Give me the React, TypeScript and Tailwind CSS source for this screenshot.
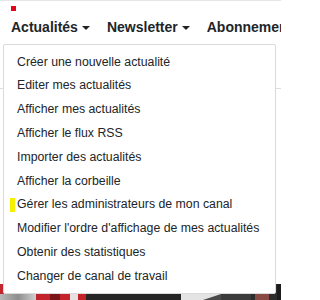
import React from 'react';

const menuItems = [
  'Créer une nouvelle actualité',
  'Editer mes actualités',
  'Afficher mes actualités',
  'Afficher le flux RSS',
  'Importer des actualités',
  'Afficher la corbeille',
  'Gérer les administrateurs de mon canal',
  "Modifier l'ordre d'affichage de mes actualités",
  'Obtenir des statistiques',
  'Changer de canal de travail',
];

const Caret = () => (
  <span className="ml-[4px] inline-block h-0 w-0 border-x-[4px] border-t-[4.5px] border-x-transparent border-t-[#222] align-[2px]" />
);

const NavLink = ({ label, caret = true }: { label: string; caret?: boolean }) => (
  <span className="whitespace-nowrap">
    {label}
    {caret && <Caret />}
  </span>
);

// bottom strip: cropped tops of the news card photos
const PhotoLeft = () => (
  <svg width="181" height="16" viewBox="0 0 181 16" className="block shrink-0">
    <defs>
      <linearGradient id="crowd" x1="0" x2="1">
        <stop offset="0" stopColor="#b8b8b8" />
        <stop offset="0.5" stopColor="#8e8e8e" />
        <stop offset="1" stopColor="#d0d0d0" />
      </linearGradient>
    </defs>
    <rect x="0" y="0" width="181" height="16" fill="#262626" />
    <rect x="0" y="0" width="36" height="16" fill="url(#crowd)" />
    <rect x="0" y="0" width="4" height="10" fill="#c4262e" />
    <rect x="36" y="0" width="50" height="16" fill="#c3242c" />
    <rect x="50" y="8" width="10" height="8" fill="#7a1418" />
    <rect x="70" y="6" width="8" height="10" fill="#e9e1e1" />
  </svg>
);

const PhotoRight = () => (
  <svg width="100" height="16" viewBox="0 0 100 16" className="block shrink-0">
    <rect x="0" y="0" width="100" height="16" fill="#2d2d2d" />
    <rect x="0" y="0" width="40" height="16" fill="#e4e4e4" />
    <polygon points="22,16 40,10 40,16" fill="#4a4a4a" />
    <rect x="40" y="0" width="30" height="16" fill="#3b3b3b" />
    <rect x="74" y="8" width="14" height="8" fill="#8a4a44" />
    <rect x="96" y="0" width="4" height="16" fill="#1c1c1c" />
  </svg>
);

const App: React.FC = () => {
  return (
    <div className="relative h-[300px] w-[281px] overflow-hidden border-t border-[#e6e6e6] bg-white font-['Liberation_Sans',Arial,sans-serif] text-[#212529]">
      <header className="pl-[11px] pt-[5px]">
        <div className="h-[5px] w-[5px] bg-[#e3051b]" />
        <nav className="mt-[7px] flex gap-[17px] text-[14px] font-bold leading-[18px]">
          <NavLink label="Actualités" />
          <NavLink label="Newsletter" />
          <NavLink label="Abonnements" />
        </nav>
      </header>

      <main>
        <div className="mt-[52px] border-t border-[#dedede]" />
        <div className="mt-[195px] flex">
          <PhotoLeft />
          <PhotoRight />
        </div>
      </main>

      {/* open dropdown of "Actualités" */}
      <ul className="absolute left-[3px] top-[43px] w-[273px] rounded-[2px] border border-[#dadada] bg-white py-[5px] text-[12.3px] text-[#212529]">
        {menuItems.map((item, i) => (
          <li key={item} className="relative flex h-[23.8px] items-center whitespace-nowrap pl-[13px]">
            {i === 6 && <span className="absolute left-[6px] top-[5px] h-[14px] w-[5px] bg-[#f5f000]" />}
            {item}
          </li>
        ))}
      </ul>
    </div>
  );
};

export default App;
